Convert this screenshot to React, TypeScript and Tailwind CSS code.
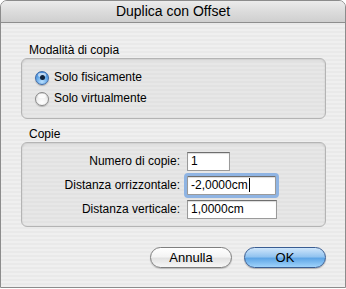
import React from 'react';

const stripes =
  'bg-[repeating-linear-gradient(180deg,#efefef_0px,#efefef_2px,#e9e9e9_2px,#e9e9e9_4px)]';

const Radio: React.FC<{ checked?: boolean; label: string }> = ({ checked, label }) => (
  <label className="flex items-center h-[21px] gap-[5px]">
    {checked ? (
      <span className="relative w-[14px] h-[14px] rounded-full border border-[#3d6aa8] bg-[radial-gradient(circle_at_50%_80%,#b9e0ff_0%,#5fa4e6_55%,#3c7fcf_100%)] shadow-[0_1px_1px_rgba(0,0,0,0.25)] flex items-center justify-center">
        <span className="absolute top-[1px] left-[2px] w-[8px] h-[4px] rounded-full bg-white/60" />
        <span className="relative w-[5px] h-[5px] rounded-full bg-[#10223a]" />
      </span>
    ) : (
      <span className="relative w-[14px] h-[14px] rounded-full border border-[#8a8a8a] bg-[radial-gradient(circle_at_50%_80%,#ffffff_0%,#f0f0f0_50%,#c9c9c9_100%)] shadow-[0_1px_1px_rgba(0,0,0,0.2)]">
        <span className="absolute top-[1px] left-[2px] w-[8px] h-[4px] rounded-full bg-white/80" />
      </span>
    )}
    <span className="text-[12px] leading-[15px] text-black">{label}</span>
  </label>
);

const Field: React.FC<{ label: string; value: string; width: string; focused?: boolean }> = ({
  label,
  value,
  width,
  focused,
}) => (
  <div className="flex items-center h-[24px]">
    <span className="w-[158px] text-right text-[12px] leading-[15px] text-black">{label}</span>
    <div
      className={`ml-[7px] h-[19px] ${width} bg-white border border-[#9a9a9a] border-t-[#6e6e6e] shadow-[inset_0_1px_1px_rgba(0,0,0,0.15)] flex items-center pl-[3px] text-[12px] leading-[15px] text-black ${
        focused ? 'outline outline-[3px] outline-[#8fb4e3] rounded-[1px]' : ''
      }`}
    >
      {value}
      {focused && <span className="ml-[1px] w-[1px] h-[14px] bg-black" />}
    </div>
  </div>
);

const GroupBox: React.FC<{ title: string; className?: string; children: React.ReactNode }> = ({
  title,
  className,
  children,
}) => (
  <div className="flex flex-col">
    <div className="pl-[8px] h-[15px] text-[12px] leading-[15px] text-black">{title}</div>
    <div
      className={`rounded-[6px] border border-[#b4b4b4] bg-[repeating-linear-gradient(180deg,#e7e7e7_0px,#e7e7e7_2px,#e2e2e2_2px,#e2e2e2_4px)] shadow-[inset_0_1px_2px_rgba(0,0,0,0.12)] ${className ?? ''}`}
    >
      {children}
    </div>
  </div>
);

const App: React.FC = () => {
  return (
    <div className="w-[346px] h-[289px] bg-white font-['Liberation_Sans',Arial,sans-serif]">
      <div className={`w-[346px] h-[288px] flex flex-col rounded-t-[7px] border border-[#8c8c8c] overflow-hidden ${stripes}`}>
        <div className="h-[22px] shrink-0 flex items-center justify-center border-b border-[#8e8e8e] bg-[linear-gradient(180deg,#ececec_0%,#dcdcdc_50%,#cfcfcf_100%)]">
          <span className="text-[14px] leading-[17px] text-black">Duplica con Offset</span>
        </div>

        <div className="flex flex-col pl-[20px] pr-[19px] pt-[20px]">
          <GroupBox title="Modalità di copia" className="h-[61px] pt-[8px] pl-[13px]">
            <Radio checked label="Solo fisicamente" />
            <Radio label="Solo virtualmente" />
          </GroupBox>

          <div className="mt-[8px]">
            <GroupBox title="Copie" className="h-[85px] pt-[6px]">
              <Field label="Numero di copie:" value="1" width="w-[43px]" />
              <Field label="Distanza orrizzontale:" value="-2,0000cm" width="w-[89px]" focused />
              <Field label="Distanza verticale:" value="1,0000cm" width="w-[90px]" />
            </GroupBox>
          </div>

          <div className="flex justify-end gap-[12px] mt-[20px]">
            <button className="w-[82px] h-[21px] rounded-full border border-[#7f7f7f] bg-[linear-gradient(180deg,#ffffff_0%,#f4f4f4_45%,#e2e2e2_55%,#f7f7f7_100%)] shadow-[0_1px_1px_rgba(0,0,0,0.2)] text-[13px] leading-[16px] text-black">
              Annulla
            </button>
            <button className="w-[82px] h-[21px] rounded-full border border-[#3a5d92] bg-[linear-gradient(180deg,#cfe6fb_0%,#93c4f0_45%,#5fa6e6_55%,#9fd3fb_100%)] shadow-[0_1px_1px_rgba(0,0,0,0.25)] text-[13px] leading-[16px] text-black">
              OK
            </button>
          </div>
        </div>
      </div>
    </div>
  );
};

export default App;
